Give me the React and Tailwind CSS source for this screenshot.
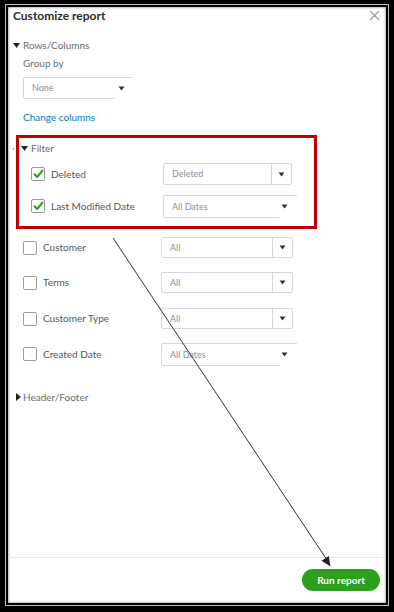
import React from "react";

const FONT = { fontFamily: "Lato, 'Open Sans', Arial, sans-serif" };

function Caret() {
  return (
    <svg width="7" height="5" viewBox="0 0 7 5">
      <path d="M0.5 0.5 L6.5 0.5 L3.5 4.5 Z" fill="#333" />
    </svg>
  );
}

function TriDown() {
  return (
    <svg width="7" height="5" viewBox="0 0 7 5">
      <path d="M0 0 L7 0 L3.5 5 Z" fill="#222" />
    </svg>
  );
}

function TriRight() {
  return (
    <svg width="5" height="8" viewBox="0 0 5 8">
      <path d="M0 0 L5 4 L0 8 Z" fill="#222" />
    </svg>
  );
}

function Checkbox({ checked }) {
  return (
    <div className="w-[14px] h-[14px] border border-[#9a9ca0] rounded-[2px] bg-white flex items-center justify-center shrink-0">
      {checked && (
        <svg width="11" height="10" viewBox="0 0 11 10">
          <path d="M1.5 5.2 L4.2 8 L9.5 1.5" fill="none" stroke="#2ca01c" strokeWidth="2" strokeLinecap="round" strokeLinejoin="round" />
        </svg>
      )}
    </div>
  );
}

function SelectBox({ text, w, h = "h-[21px]" }) {
  return (
    <div className={`${w} ${h} border border-[#d4d7dc] rounded-[2px] flex items-stretch bg-white`}>
      <div className="flex-1 flex items-center pl-[8px] text-[9px] text-[#8d9096]">{text}</div>
      <div className="w-[20px] border-l border-[#d4d7dc] flex items-center justify-center">
        <Caret />
      </div>
    </div>
  );
}

function OpenSelect({ text, w, h = "h-[22px]", bottomW, caretPr }) {
  return (
    <div className={`${w} ${h} relative border-l border-t border-[#d4d7dc] rounded-tl-[2px] flex items-center bg-white`}>
      <div className="flex-1 pl-[8px] text-[9px] text-[#8d9096]">{text}</div>
      <div className={`${caretPr} flex items-center`}>
        <Caret />
      </div>
      <div className={`absolute left-0 -bottom-px h-px bg-[#d4d7dc] ${bottomW}`} />
    </div>
  );
}

function FilterRow({ label, checked, leftW, pl, children, h }) {
  return (
    <div className={`flex items-center ${h}`}>
      <div className={`${leftW} ${pl} flex items-center gap-[6px]`}>
        <Checkbox checked={checked} />
        <span className="text-[10px] text-[#55565a]">{label}</span>
      </div>
      {children}
    </div>
  );
}

export default function App() {
  return (
    <div style={FONT} className="w-[394px] h-[612px] bg-black pt-[4px] pl-[5px] pr-[5px] pb-[6px]">
      <div className="h-full border border-[#bdbdbd]">
        <div className="h-full border-2 border-black">
          <div className="h-full bg-white shadow-[inset_0_0_3px_rgba(0,0,0,0.55)] flex flex-col relative">
            {/* Title */}
            <div className="flex items-center justify-between pl-[5px] pr-[6px] mt-[1px] h-[16px]">
              <span className="text-[12px] font-bold text-[#2b2b2b] leading-[16px]">Customize report</span>
              <svg width="11" height="11" viewBox="0 0 11 11" className="-mt-[1px]">
                <path d="M1 1 L10 10 M10 1 L1 10" stroke="#a3a3a3" strokeWidth="1.4" />
              </svg>
            </div>

            {/* Rows/Columns */}
            <div className="mt-[14px] flex items-center h-[14px] pl-[5px]">
              <div className="w-[10px] flex items-center"><TriDown /></div>
              <span className="text-[10px] text-[#6b6c72]">Rows/Columns</span>
            </div>
            <div className="mt-[4px] h-[14px] pl-[15px] flex items-center text-[10px] text-[#6b6c72]">Group by</div>
            <div className="mt-[7px] pl-[15px]">
              <OpenSelect text="None" w="w-[110px]" h="h-[21px]" bottomW="w-[90px]" caretPr="pr-[8px]" />
            </div>
            <div className="mt-[12px] h-[14px] pl-[15px] flex items-center text-[10px] text-[#0a7cc4]">Change columns</div>

            {/* Filter (annotated) */}
            <div className="relative">
              <div className="absolute left-[5px] top-[24px] w-[1px] h-[2px] bg-[#999]" />
            </div>
            <div className="mt-[11px] ml-[8px] w-[301px] border-[3px] border-[#c00000] pt-[3px] pb-[9px]">
              <div className="flex items-center h-[14px] pl-[2px]">
                <div className="w-[10px] flex items-center"><TriDown /></div>
                <span className="text-[10px] text-[#6b6c72]">Filter</span>
              </div>
              <div className="mt-[8px]">
                <FilterRow label="Deleted" checked leftW="w-[144px]" pl="pl-[12px]" h="h-[22px]">
                  <SelectBox text="Deleted" w="w-[129px]" h="h-[22px]" />
                </FilterRow>
              </div>
              <div className="mt-[10px]">
                <FilterRow label="Last Modified Date" checked leftW="w-[144px]" pl="pl-[12px]" h="h-[22px]">
                  <OpenSelect text="All Dates" w="w-[134px]" h="h-[22px]" bottomW="w-[115px]" caretPr="pr-[9px]" />
                </FilterRow>
              </div>
            </div>

            {/* Other filters */}
            <div className="mt-[8px]">
              <FilterRow label="Customer" leftW="w-[153px]" pl="pl-[15px]" h="h-[21px]">
                <SelectBox text="All" w="w-[132px]" />
              </FilterRow>
            </div>
            <div className="mt-[14px]">
              <FilterRow label="Terms" leftW="w-[153px]" pl="pl-[15px]" h="h-[21px]">
                <SelectBox text="All" w="w-[132px]" />
              </FilterRow>
            </div>
            <div className="mt-[15px]">
              <FilterRow label="Customer Type" leftW="w-[153px]" pl="pl-[15px]" h="h-[21px]">
                <SelectBox text="All" w="w-[132px]" />
              </FilterRow>
            </div>
            <div className="mt-[14px]">
              <FilterRow label="Created Date" leftW="w-[153px]" pl="pl-[15px]" h="h-[22px]">
                <OpenSelect text="All Dates" w="w-[136px]" h="h-[22px]" bottomW="w-[118px]" caretPr="pr-[9px]" />
              </FilterRow>
            </div>

            {/* Header/Footer */}
            <div className="mt-[25px] flex items-center h-[14px] pl-[8px]">
              <div className="w-[7px] flex items-center"><TriRight /></div>
              <span className="text-[10px] text-[#6b6c72]">Header/Footer</span>
            </div>

            <div className="flex-1" />

            {/* Footer */}
            <div className="border-t border-[#e3e8ef] pt-[11px] pb-[12px] pr-[6px] flex justify-end">
              <button className="w-[78px] h-[22px] rounded-full bg-[#2ca01c] text-white text-[10px] font-bold flex items-center justify-center">
                Run report
              </button>
            </div>

            {/* Annotation arrow */}
            <svg className="absolute left-0 top-0 pointer-events-none" width="378" height="596" viewBox="8 7 378 596">
              <line x1="113" y1="238" x2="327" y2="560" stroke="#333" strokeWidth="1" />
              <path d="M330.5 566.5 L321.5 560.8 L328.8 556 Z" fill="#222" />
            </svg>
          </div>
        </div>
      </div>
    </div>
  );
}
